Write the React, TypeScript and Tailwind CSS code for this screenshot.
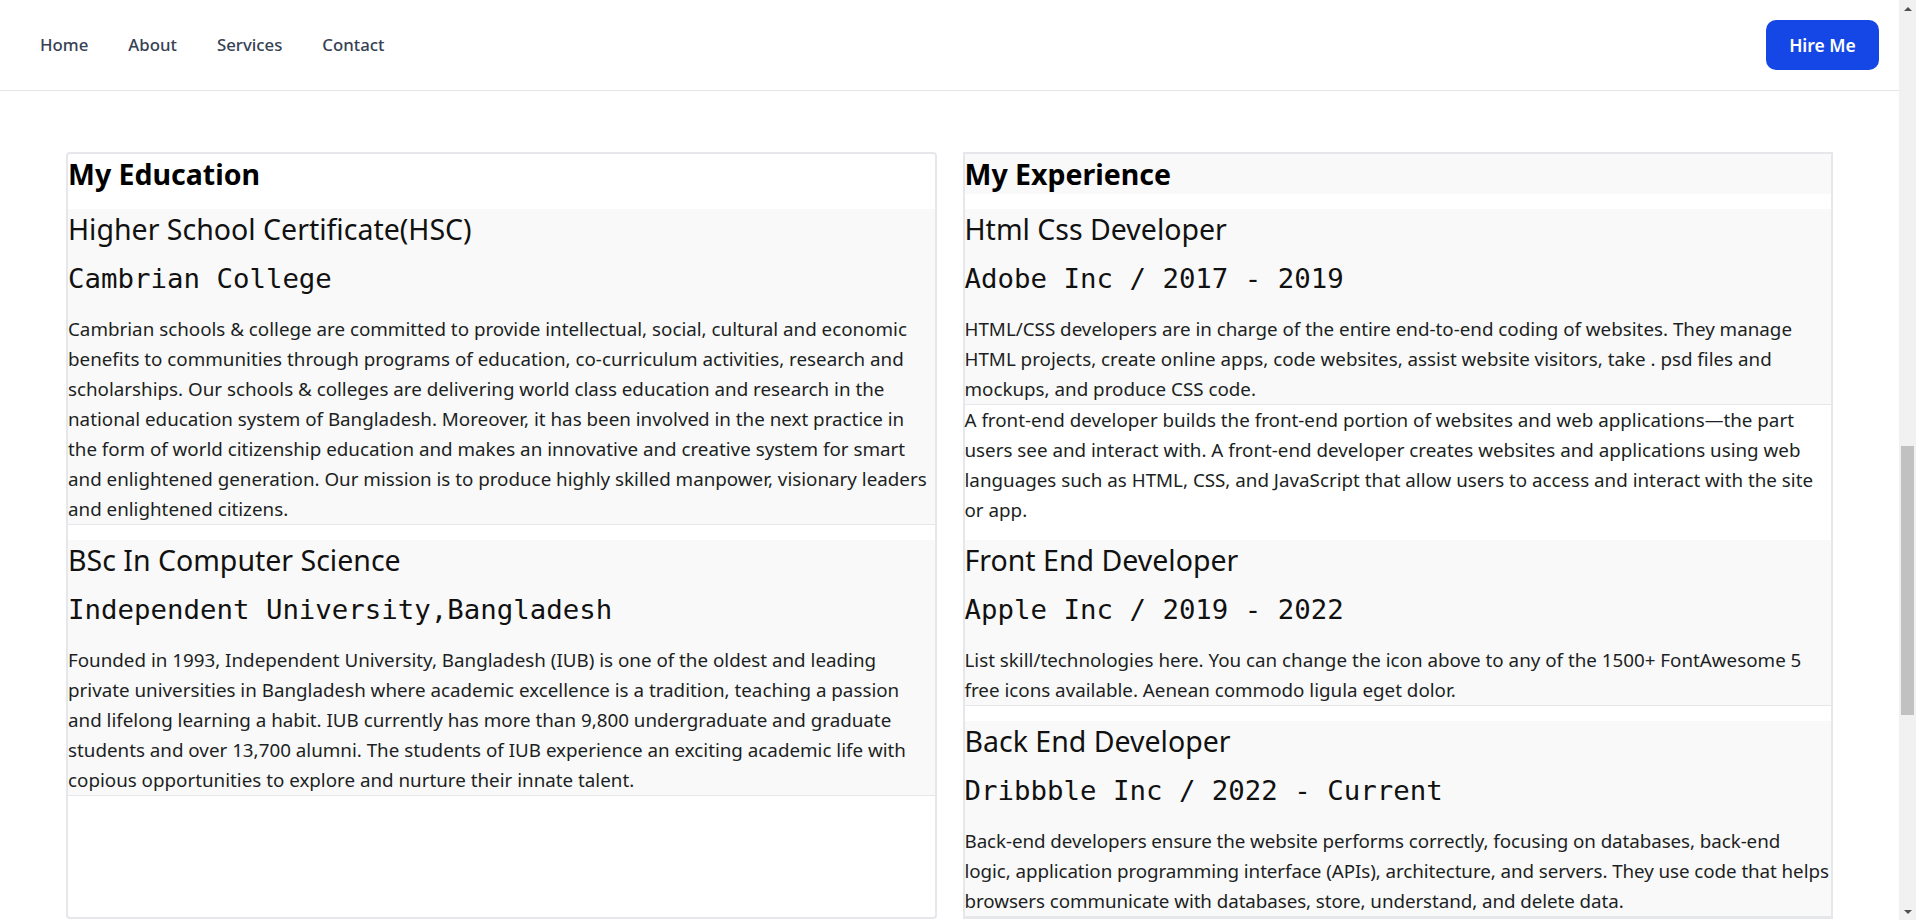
import React from 'react';

const navLinks = [
    { id: 1, name: "Home" },
    { id: 2, name: "About" },
    { id: 3, name: "Services" },
    { id: 4, name: "Contact" },
];

const education = [
    {
        id: 1,
        title: "Higher School Certificate(HSC)",
        place: "Cambrian College",
        text: "Cambrian schools & college are committed to provide intellectual, social, cultural and economic benefits to communities through programs of education, co-curriculum activities, research and scholarships. Our schools & colleges are delivering world class education and research in the national education system of Bangladesh. Moreover, it has been involved in the next practice in the form of world citizenship education and makes an innovative and creative system for smart and enlightened generation. Our mission is to produce highly skilled manpower, visionary leaders and enlightened citizens.",
    },
    {
        id: 2,
        title: "BSc In Computer Science",
        place: "Independent University,Bangladesh",
        text: "Founded in 1993, Independent University, Bangladesh (IUB) is one of the oldest and leading private universities in Bangladesh where academic excellence is a tradition, teaching a passion and lifelong learning a habit. IUB currently has more than 9,800 undergraduate and graduate students and over 13,700 alumni. The students of IUB experience an exciting academic life with copious opportunities to explore and nurture their innate talent.",
    },
];

const experience = [
    {
        id: 1,
        title: "Html Css Developer",
        place: "Adobe Inc / 2017 - 2019",
        text: "HTML/CSS developers are in charge of the entire end-to-end coding of websites. They manage HTML projects, create online apps, code websites, assist website visitors, take . psd files and mockups, and produce CSS code.",
        extra: "A front-end developer builds the front-end portion of websites and web applications—the part users see and interact with. A front-end developer creates websites and applications using web languages such as HTML, CSS, and JavaScript that allow users to access and interact with the site or app.",
    },
    {
        id: 2,
        title: "Front End Developer",
        place: "Apple Inc / 2019 - 2022",
        text: "List skill/technologies here. You can change the icon above to any of the 1500+ FontAwesome 5 free icons available. Aenean commodo ligula eget dolor.",
    },
    {
        id: 3,
        title: "Back End Developer",
        place: "Dribbble Inc / 2022 - Current",
        text: "Back-end developers ensure the website performs correctly, focusing on databases, back-end logic, application programming interface (APIs), architecture, and servers. They use code that helps browsers communicate with databases, store, understand, and delete data.",
        tight: true,
    },
];

type Item = { id: number; title: string; place: string; text: string; extra?: string; tight?: boolean };

const Entry = ({ item }: { item: Item }) => {
    return (
        <div className='mt-[15px]'>
            <div className='bg-[#f9f9f9] border-b border-gray-200'>
                <h3 className='text-[28.5px] leading-[40px] text-[#111]'>{item.title}</h3>
                <h4 className="mt-[10px] text-[27.4px] leading-[40px] text-[#111] font-['DejaVu_Sans_Mono',monospace]">{item.place}</h4>
                <p className={item.tight
                    ? 'mt-[15px] text-[18.8px] leading-[30px] tracking-[-0.075px] text-[#1c1f23]'
                    : 'mt-[15px] text-[18.8px] leading-[30px] text-[#1c1f23]'}>
                    {item.text}
                </p>
            </div>
            {item.extra && (
                <p className='text-[18.8px] leading-[30px] text-[#1c1f23]'>{item.extra}</p>
            )}
        </div>
    );
};

// browser scrollbar strip on the right edge, as in the capture
const Scrollbar = () => (
    <div className='w-[17px] shrink-0 bg-[#f1f1f1] flex flex-col items-center'>
        <div className='h-[17px] flex items-center justify-center'>
            <span className='block w-0 h-0 border-x-[4px] border-x-transparent border-b-[4px] border-b-[#505050]' />
        </div>
        <div className='flex-1 w-full px-[2px]'>
            <div className='mt-[429px] h-[269px] w-full bg-[#c1c1c1]' />
        </div>
        <div className='h-[17px] flex items-center justify-center'>
            <span className='block w-0 h-0 border-x-[4px] border-x-transparent border-t-[4px] border-t-[#505050]' />
        </div>
    </div>
);

const App = () => {
    return (
        <div className="h-screen flex bg-white font-['Noto_Sans',sans-serif] overflow-hidden">
            <div className='flex-1 min-w-0'>
                <nav className='h-[91px] border-b border-gray-200 flex items-center justify-between pl-10 pr-5'>
                    <ul className='flex items-center gap-10'>
                        {navLinks.map(link => (
                            <li key={link.id} className='text-[16.8px] font-medium text-gray-700'>
                                <a href='#'>{link.name}</a>
                            </li>
                        ))}
                    </ul>
                    <button className='h-[50px] w-[113px] rounded-[10px] bg-blue-700 text-white text-[17.5px] font-semibold'>
                        Hire Me
                    </button>
                </nav>
                <main className='grid grid-cols-2 gap-[26px] px-[66px] pt-[61px] pb-16'>
                    <section className='rounded border-2 border-gray-200'>
                        <h2 className='text-[28.5px] leading-[40px] font-bold text-black'>My Education</h2>
                        {education.map(item => <Entry key={item.id} item={item} />)}
                    </section>
                    <section className='border-2 border-gray-200'>
                        <h2 className='bg-[#f9f9f9] text-[28.5px] leading-[40px] font-bold text-black'>My Experience</h2>
                        {experience.map(item => <Entry key={item.id} item={item} />)}
                    </section>
                </main>
            </div>
            <Scrollbar />
        </div>
    );
};

export default App;
